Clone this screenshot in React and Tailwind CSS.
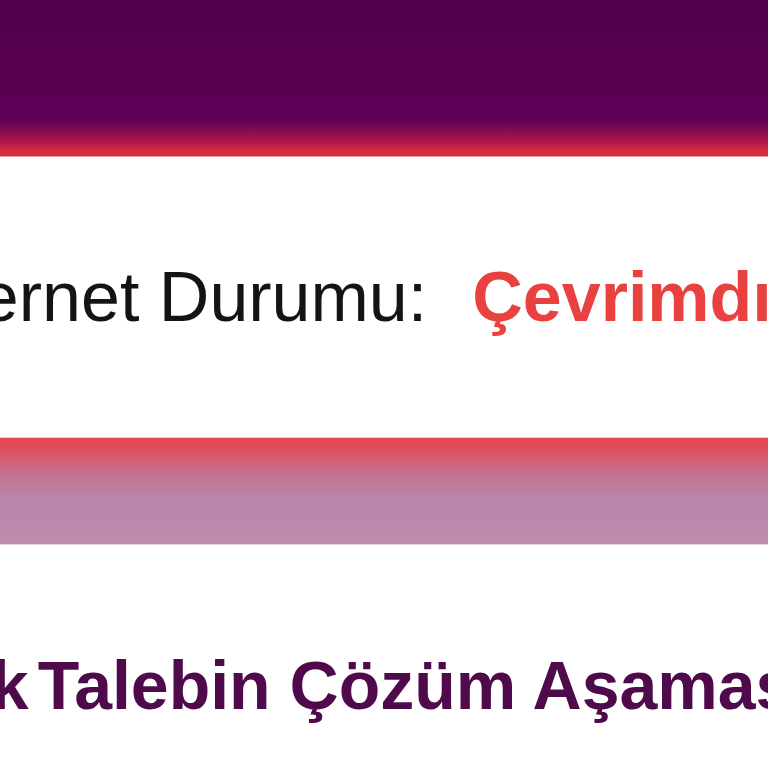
export default function App() {
  return (
    <div className="w-[768px] h-[768px] overflow-hidden bg-white" style={{ fontFamily: '"Liberation Sans", Arial, sans-serif' }}>
      {/* top bar */}
      <div className="h-[156px] bg-[linear-gradient(to_bottom,#51004e_0%,#5d0055_76%,#8a0e52_85%,#b41a48_92%,#d92d3c_97%,#c23640_100%)]" />
      <div className="h-px bg-[#e89aa0]" />

      {/* status row */}
      <div className="h-[280px] flex items-center whitespace-nowrap">
        <div className="-ml-[98px] flex items-baseline text-[70px] leading-none">
          <span className="text-[#141414]">İnternet Durumu:</span>
          <span className="ml-[45px] font-bold text-[#e8413f]">Çevrimdışı</span>
        </div>
      </div>

      {/* divider band */}
      <div className="h-px bg-[#f4c4c6]" />
      <div className="h-[106px] bg-[linear-gradient(to_bottom,#e54853_0%,#e24a57_8%,#d3627a_22%,#c27494_38%,#b985a9_55%,#bd8cad_100%)]" />
      <div className="h-px bg-[#e6d3df]" />

      {/* title */}
      <div className="pt-[106px] whitespace-nowrap">
        <div className="-ml-[115px] flex items-baseline text-[68px] leading-none font-bold text-[#4f0a4c]">
          <span>Açık</span>
          <span className="ml-[9px]">Talebin Çözüm Aşaması</span>
        </div>
      </div>
    </div>
  )
}
